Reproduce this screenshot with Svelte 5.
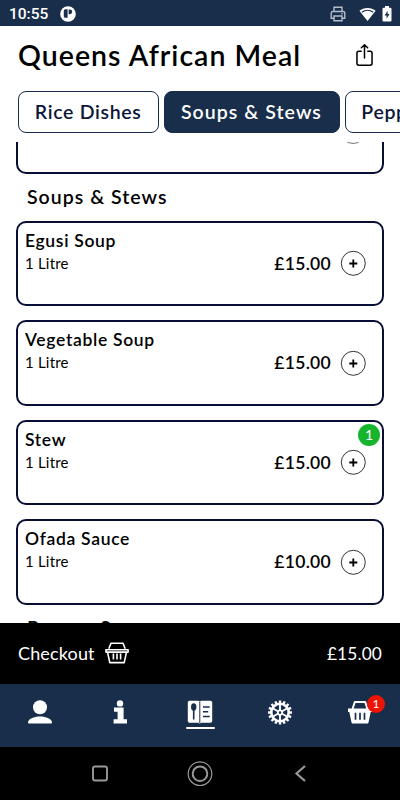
<script>
  const categories = ['Rice Dishes', 'Soups & Stews', 'Pepper Soup']
  let active = $state('Soups & Stews')

  let dishes = $state([
    { name: 'Egusi Soup', size: '1 Litre', price: 15, qty: 0 },
    { name: 'Vegetable Soup', size: '1 Litre', price: 15, qty: 0 },
    { name: 'Stew', size: '1 Litre', price: 15, qty: 1 },
    { name: 'Ofada Sauce', size: '1 Litre', price: 10, qty: 0 }
  ])

  let count = $derived(dishes.reduce((n, d) => n + d.qty, 0))
  let total = $derived(dishes.reduce((n, d) => n + d.qty * d.price, 0))

  const teeth = Array.from({ length: 16 }, (_, i) => i * 22.5)
  const spokes = [0, 60, 120, 180, 240, 300]
  const money = (v) => '£' + v.toFixed(2)
</script>

<div class="phone">
  <div class="status">
    <span class="time">10:55</span>
    <svg class="app-dot" width="16" height="16" viewBox="0 0 16 16">
      <circle cx="8" cy="8" r="7.8" fill="#fff" />
      <path d="M5.4 3.2h2.2v8.6H5.4A1.6 1.6 0 0 1 3.8 10.2V4.8a1.6 1.6 0 0 1 1.6-1.6z" fill="#182e4b" />
      <path d="M8.6 3.4h1.2a2.4 2.4 0 0 1 0 4.8H8.6z" fill="#182e4b" />
    </svg>
    <span class="spacer"></span>
    <svg class="printer" width="16" height="16" viewBox="0 0 16 16" fill="none" stroke="#b4bdc9" stroke-width="1.4">
      <path d="M4 5.5V1.2h8v4.3M4 12.3H1.2V7a1.5 1.5 0 0 1 1.5-1.5h10.6A1.5 1.5 0 0 1 14.8 7v5.3H12M4 10h8v4.8H4z" />
      <path d="M11.3 7.8h1.4" />
    </svg>
    <svg class="wifi" width="17" height="15" viewBox="0 0 18 15">
      <path d="M9 .5C5.6.5 2.6 1.7.4 3.5L9 14.5l8.6-11C15.4 1.7 12.4.5 9 .5z" fill="#fff" />
      <path d="M3 5.2a10 10 0 0 1 12 0" fill="none" stroke="#182e4b" stroke-width="1.3" />
    </svg>
    <svg class="battery" width="10" height="16" viewBox="0 0 10 16">
      <path d="M3 0h4v1.8h1.4q1.1 0 1.1 1.1v11.6q0 1.1-1.1 1.1H1.6Q.5 15.6.5 14.5V2.9q0-1.1 1.1-1.1H3z" fill="#fff" />
      <path d="M5.6 4.8 2.6 9.4h2v3.3l3-4.7h-2z" fill="#182e4b" />
    </svg>
  </div>

  <header>
    <h1>Queens African Meal</h1>
    <button class="share" aria-label="Share">
      <svg width="17" height="24" viewBox="0 0 18 24" fill="none" stroke="#000" stroke-width="1.6" stroke-linecap="round" stroke-linejoin="round">
        <path d="M5.5 8H3a2 2 0 0 0-2 2v10.8a2 2 0 0 0 2 2h12a2 2 0 0 0 2-2V10a2 2 0 0 0-2-2h-2.5M9 15.3V1.2M5.7 4.4 9 1.1l3.3 3.3" />
      </svg>
    </button>
  </header>

  <div class="tabs">
    {#each categories as cat}
      <button class="tab" class:active={cat === active} onclick={() => (active = cat)}>{cat}</button>
    {/each}
  </div>

  <main>
    <div class="card previous"><span class="add"></span></div>
    <h2>Soups &amp; Stews</h2>
    {#each dishes as dish}
      <div class="card">
        <div class="info">
          <div class="name">{dish.name}</div>
          <div class="size">{dish.size}</div>
        </div>
        <span class="price">{money(dish.price)}</span>
        <button class="add" aria-label="Add {dish.name}" onclick={() => dish.qty++}>
          <svg width="26" height="26" viewBox="0 0 26 26" fill="none" stroke="#000">
            <circle cx="13.3" cy="13.3" r="12" stroke-width=".8" />
            <path d="M9.3 13.5h8M13.3 9.5v8" stroke-width="1.8" />
          </svg>
        </button>
        {#if dish.qty}
          <span class="qty">{dish.qty}</span>
        {/if}
      </div>
    {/each}
    <h2>Pepper Soup</h2>
  </main>

  <div class="checkout">
    <span>Checkout</span>
    <svg width="24" height="22" viewBox="0 0 24 22" fill="none" stroke="#fff" stroke-width="1.6" stroke-linejoin="round">
      <path d="M3.8 6.8 6 1.3h12l2.2 5.5M.9 7.8h22.2v2.3H.9zM2.5 10.1l2.3 10.5h14.4l2.3-10.5M8.4 11.5v6M12 11.5v6M15.6 11.5v6" />
    </svg>
    <span class="total">{money(total)}</span>
  </div>

  <nav>
    <div class="item">
      <svg width="26" height="25" viewBox="0 0 26 25" fill="#fff">
        <circle cx="13" cy="7.3" r="7" />
        <path d="M1 22.5c0-3.5 6-6 12-6s12 2.5 12 6c0 .8-.5 1.1-1.2 1.1H2.2C1.5 23.6 1 23.3 1 22.5z" />
      </svg>
    </div>
    <div class="item">
      <svg width="26" height="25" viewBox="0 0 26 25" fill="#fff">
        <circle cx="13" cy="3.4" r="3.2" />
        <path d="M7 7.5h9.6v11.7H20v4.2H6.6v-4.2h4v-7.5H7z" />
      </svg>
    </div>
    <div class="item current">
      <svg width="26" height="25" viewBox="0 0 26 25">
        <path d="M2.5.8h8.3q1.4 0 2 1 .6-1 2-1h8.7a1.7 1.7 0 0 1 1.7 1.7v18.6a1.7 1.7 0 0 1-1.7 1.7h-8.7q-1.4 0-2 1-.6-1-2-1H2.5a1.7 1.7 0 0 1-1.7-1.7V2.5A1.7 1.7 0 0 1 2.5.8z" fill="#fff" />
        <path d="M12.8 2v21" stroke="#182e4b" stroke-width="1" />
        <ellipse cx="6.7" cy="7" rx="2.7" ry="3.7" fill="#182e4b" />
        <path d="M6.7 9v10.5M16 7h6.7M16 11.7h5.2M16 16.5h6.7" stroke="#182e4b" stroke-width="1.6" fill="none" />
      </svg>
    </div>
    <div class="item">
      <svg width="26" height="25" viewBox="-13 -12.5 26 25" fill="none" stroke="#fff">
        <circle r="8.7" stroke-width="2.6" />
        {#each teeth as a}
          <path d="M0-9v-3" stroke-width="2.4" transform="rotate({a})" />
        {/each}
        {#each spokes as a}
          <path d="M0-2v-6" stroke-width="1.9" transform="rotate({a})" />
        {/each}
        <circle r="2.2" stroke-width="1.8" />
      </svg>
    </div>
    <div class="item">
      <svg width="26" height="25" viewBox="0 0 26 25">
        <path d="M5.5 9 7.8 2h10.4l2.3 7" fill="none" stroke="#fff" stroke-width="2" stroke-linejoin="round" />
        <path d="M1 8.5h24v3.6h-1.3l-2.2 10.3q-.3 1.2-1.5 1.2H6q-1.2 0-1.5-1.2L2.3 12.1H1z" fill="#fff" />
        <path d="M8.5 12.7v7M13 12.7v7M17.5 12.7v7" stroke="#182e4b" stroke-width="1.7" />
      </svg>
      <span class="badge">{count}</span>
    </div>
  </nav>

  <div class="system">
    <svg width="26" height="26" viewBox="0 0 26 26" fill="none" stroke="#999">
      <rect x="6" y="5.5" width="14" height="14" rx="2" stroke-width="1.9" />
    </svg>
    <svg width="26" height="26" viewBox="0 0 26 26" fill="none" stroke="#999">
      <circle cx="13" cy="12.7" r="11.8" stroke-width="1.2" />
      <circle cx="13" cy="12.7" r="7.3" stroke-width="2" />
    </svg>
    <svg width="26" height="26" viewBox="0 0 26 26" fill="none" stroke="#999">
      <path d="m18 5-8.5 7.5L18 20" stroke-width="2.2" />
    </svg>
  </div>
</div>

<style>
  :global(body) { margin: 0; background: #fff; }
  .phone { width: 400px; height: 800px; display: flex; flex-direction: column; overflow: hidden; background: #fff; color: #000; font-family: Lato, sans-serif; }
  button { font: inherit; color: inherit; background: none; border: 0; padding: 0; margin: 0; cursor: pointer; }
  svg { display: block; flex: none; }

  .status { flex: none; height: 26px; box-sizing: border-box; padding: 2px 8px 0 9px; display: flex; align-items: center; background: #182e4b; }
  .time { width: 51px; font: 500 15.5px/22px Roboto, sans-serif; color: #fff; }
  .spacer { flex: 1; }
  .wifi { margin-left: 13px; }
  .battery { margin-left: 6px; }

  header { flex: none; height: 64px; box-sizing: border-box; padding: 0 27px 6px 18px; display: flex; align-items: center; justify-content: space-between; }
  h1 { margin: 0; font-size: 28.5px; line-height: 36px; font-weight: 600; letter-spacing: 1.02px; white-space: nowrap; }

  .tabs { flex: none; height: 52px; display: flex; gap: 5px; padding: 1px 0 0 18px; box-sizing: border-box; }
  .tab { flex: none; height: 42px; box-sizing: border-box; padding: 0 16.6px 2px 15.8px; border: 1px solid #182e4b; border-radius: 8px; font-size: 19.5px; font-weight: 600; letter-spacing: 0.68px; color: #0b1638; white-space: nowrap; }
  .tab.active { background: #182e4b; color: #fff; letter-spacing: 1.05px; }

  main { flex: none; height: 480.5px; padding: 0 16px; overflow: hidden; }
  .card { position: relative; box-sizing: border-box; height: 85.5px; margin-bottom: 14px; padding: 0 16px 0 7px; border: 2px solid #070d35; border-radius: 10px; display: flex; align-items: center; }
  .previous { margin-top: -54px; margin-bottom: 0; }
  .previous .add { margin-left: auto; box-sizing: border-box; border: 1px solid #777; border-radius: 50%; }
  h2 { margin: 0; height: 47px; box-sizing: border-box; padding: 9px 0 0 11px; font-size: 19.5px; line-height: 28px; font-weight: 600; letter-spacing: 1.02px; }
  h2:last-child { margin-top: -14px; }
  .info { flex: 1; align-self: flex-start; padding-top: 7px; }
  .name { font-size: 17.5px; line-height: 22px; font-weight: 600; letter-spacing: 0.68px; }
  .size { font-size: 15px; line-height: 22px; letter-spacing: 0.2px; }
  .price { font-size: 17.5px; font-weight: 600; letter-spacing: 0.3px; }
  .add { width: 26px; height: 26px; margin-left: 9px; }
  .qty { position: absolute; top: 2px; right: 2px; width: 22px; height: 22px; border-radius: 50%; background: #17b52e; color: #fff; font-size: 14px; line-height: 22px; text-align: center; }

  .checkout { flex: none; height: 61.5px; box-sizing: border-box; padding: 0 18px; display: flex; align-items: center; gap: 10px; background: #000; color: #fff; font-size: 18px; letter-spacing: 0.15px; }
  .total { margin-left: auto; font-size: 17.3px; }

  nav { flex: none; height: 63px; box-sizing: border-box; padding-top: 16px; display: flex; background: #182e4b; }
  .item { position: relative; flex: 1; display: flex; flex-direction: column; align-items: center; }
  .current::after { content: ''; width: 29px; height: 2px; margin-top: 2px; border-radius: 1px; background: #fff; }
  .badge { position: absolute; top: -5px; left: 47px; width: 18px; height: 18px; border-radius: 50%; background: #ec1505; color: #fff; font-size: 12px; line-height: 18px; text-align: center; }

  .system { flex: 1; display: flex; align-items: center; justify-content: center; gap: 74px; background: #000; }
</style>
